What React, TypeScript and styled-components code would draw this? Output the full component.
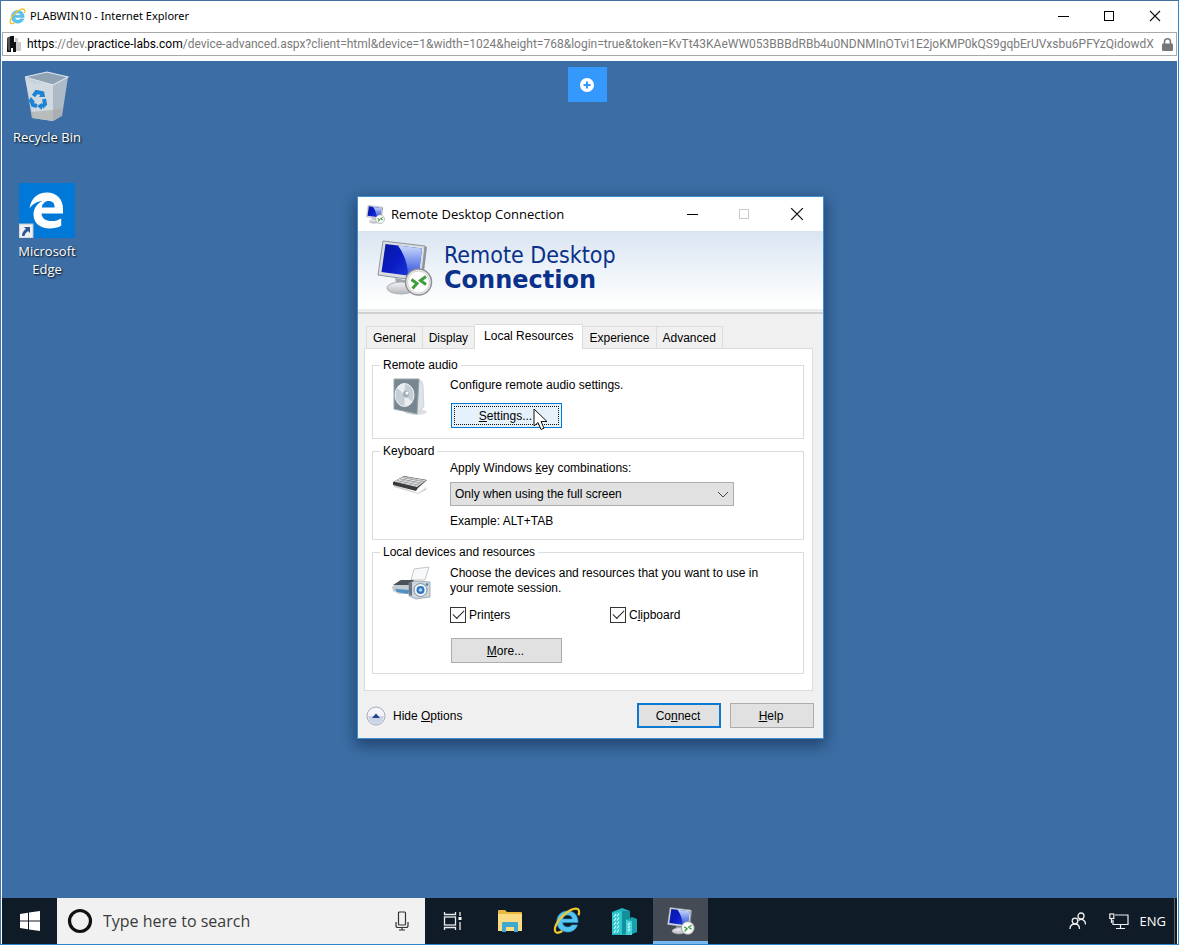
import React from 'react';
import styled, { createGlobalStyle, css } from 'styled-components';

const segoe = `"Open Sans", "Noto Sans", sans-serif`;
const dialogFont = `"Liberation Sans", Arial, sans-serif`;

const GlobalStyle = createGlobalStyle`
  *, *::before, *::after { box-sizing: border-box; }
  body { margin: 0; font-family: ${segoe}; color: #000; }
  button, input, select { font: inherit; color: inherit; margin: 0; }
  svg { display: block; flex: none; }
`;

/* ---------- browser window ---------- */

const BrowserWindow = styled.div`
  min-height: 100vh;
  display: flex;
  flex-direction: column;
  background: #fff;
  border: 1px solid #2e86cc;
  border-top-color: #44729f;
  border-left-color: #3f77a8;
`;

const TitleBar = styled.header`
  display: flex;
  align-items: center;
  height: 30px;
  padding-left: 8px;
`;

const PageTitle = styled.h1`
  flex: 1;
  margin: 0 0 0 4px;
  font-size: 11px;
  line-height: 16px;
  font-weight: 400;
  font-family: "Noto Sans", sans-serif;
`;

const CaptionButton = styled.button<{ $width?: number }>`
  width: ${(p) => p.$width ?? 46}px;
  height: 100%;
  padding: 0;
  border: 0;
  background: transparent;
  display: flex;
  align-items: center;
  justify-content: center;
`;

const CaptionGroup = styled.div`
  display: flex;
  height: 28px;
`;

const AddressBar = styled.div`
  display: flex;
  align-items: center;
  height: 24px;
  margin: 1px 1px 5px;
  padding: 0 3px 0 4px;
  border: 1px solid #a9a9a9;
  gap: 6px;
`;

const Url = styled.div`
  flex: 1;
  min-width: 0;
  overflow: hidden;
  white-space: nowrap;
  font-family: Roboto, "Open Sans", sans-serif;
  font-size: 12px;
  line-height: 22px;
  color: #7b7b7b;
  b { font-weight: 400; color: #000; }
`;

/* ---------- desktop ---------- */

const Desktop = styled.main`
  position: relative;
  flex: 1;
  min-height: 720px;
  margin: 0 1px;
  background: #3c6ea5;
`;

const ShortcutList = styled.nav`
  display: flex;
  flex-direction: column;
  width: 90px;
  padding-top: 8px;
  gap: 37px;
`;

const Shortcut = styled.a`
  display: flex;
  flex-direction: column;
  align-items: center;
  gap: 4px;
  color: #fff;
  font-size: 13px;
  line-height: 18px;
  text-align: center;
  text-decoration: none;
  text-shadow: 1px 1px 2px #000;
`;

const ShortcutLabel = styled.span`
  width: 76px;
`;

const ToolbarToggle = styled.button`
  position: absolute;
  top: 6px;
  left: 50%;
  margin-left: -22px;
  width: 39px;
  height: 35px;
  padding: 0;
  border: 0;
  background: #3498fd;
  display: flex;
  align-items: center;
  justify-content: center;
`;

/* ---------- dialog ---------- */

const Dialog = styled.section`
  position: absolute;
  top: 135px;
  left: 355px;
  width: 467px;
  border: 1px solid #3e8ed0;
  background: #f0f0f0;
  box-shadow: 0 5px 14px 2px rgba(0, 20, 50, 0.45);
  font-family: ${dialogFont};
  font-size: 12px;
  line-height: 16px;
`;

const DialogTitleBar = styled.header`
  display: flex;
  align-items: center;
  height: 34px;
  padding-left: 8px;
  background: #fff;
`;

const DialogTitle = styled.h2`
  flex: 1;
  margin: 0 0 0 6px;
  font-family: ${segoe};
  font-size: 13px;
  font-weight: 400;
`;

const Banner = styled.div`
  display: flex;
  gap: 11px;
  height: 78px;
  padding: 9px 0 0 19px;
  background: linear-gradient(#dae5f2, #fdfefe 90%);
`;

const BannerText = styled.p`
  margin: 3px 0 0;
  color: #0a318a;
  font-family: "DejaVu Sans Condensed", "DejaVu Sans", sans-serif;
  font-size: 23px;
  line-height: 25px;
`;

const BannerStrong = styled.strong`
  display: block;
  font-family: "DejaVu Sans", sans-serif;
  font-size: 24px;
`;

const BannerEdge = styled.div`
  height: 5px;
  border-top: 2px solid #ececec;
  border-bottom: 2px solid #d0d0d0;
`;

const DialogBody = styled.div`
  padding: 10px 10px 10px 6px;
`;

const TabStrip = styled.div`
  display: flex;
  align-items: flex-end;
  padding-left: 2px;
  height: 24px;
`;

const Tab = styled.button<{ $active?: boolean }>`
  height: 22px;
  padding: 0 6px;
  border: 1px solid #dcdcdc;
  border-bottom: 0;
  background: #f0f0f0;
  white-space: nowrap;
  & + & { border-left: 0; }
  ${(p) =>
    p.$active &&
    css`
      height: 25px;
      margin-bottom: -1px;
      padding: 0 9px 3px;
      background: #fff;
      position: relative;
    `}
`;

const TabPanel = styled.div`
  padding: 8px 8px 16px 7px;
  border: 1px solid #dcdcdc;
  background: #fff;
`;

const Group = styled.fieldset`
  margin: 0;
  padding: 0;
  min-width: 0;
  border: 1px solid #dcdcdc;
  & + & { margin-top: 4px; }
`;

const Legend = styled.legend`
  margin-left: 7px;
  padding: 0 3px;
`;

const GroupBody = styled.div<{ $top: number }>`
  display: grid;
  grid-template-columns: 58px 1fr;
  padding: ${(p) => p.$top}px 0 10px 19px;
`;

const GroupContent = styled.div<{ $gap: number }>`
  display: flex;
  flex-direction: column;
  align-items: flex-start;
  gap: ${(p) => p.$gap}px;
`;

const Text = styled.p`
  margin: 0;
  line-height: 15px;
  padding-right: 24px;
`;

const DialogButton = styled.button<{ $look?: 'plain' | 'hover' | 'default'; $wide?: boolean }>`
  width: ${(p) => (p.$wide ? 111 : 84)}px;
  height: 25px;
  padding: 0 2px 0 0;
  border: 1px solid #adadad;
  background: #e1e1e1;
  ${(p) =>
    p.$look === 'hover' &&
    css`
      border-color: #0078d7;
      background: #e5f1fb;
      outline: 1px dotted #111;
      outline-offset: -4px;
    `}
  ${(p) =>
    p.$look === 'default' &&
    css`
      border: 2px solid #0f78d0;
    `}
`;

const ButtonSpot = styled.div`
  position: relative;
  margin-left: 1px;
  display: flex;
`;

const Pointer = styled.svg`
  position: absolute;
  left: 82px;
  top: 5px;
`;

const Field = styled.label`
  display: block;
`;

const SelectWrap = styled.div`
  position: relative;
  width: 284px;
  margin-bottom: 2px;
`;

const Select = styled.select`
  appearance: none;
  display: block;
  width: 100%;
  height: 24px;
  padding: 0 24px 0 4px;
  border: 1px solid #adadad;
  border-radius: 0;
  background: #e1e1e1;
`;

const SelectArrow = styled.svg`
  position: absolute;
  right: 5px;
  top: 9px;
  pointer-events: none;
`;

const CheckRow = styled.div`
  display: grid;
  grid-template-columns: 160px 160px;
  padding-bottom: 4px;
`;

const CheckLabel = styled.label`
  display: flex;
  align-items: center;
  gap: 3px;
`;

const Check = styled.input`
  appearance: none;
  width: 16px;
  height: 16px;
  border: 1px solid #333;
  background: #fff;
  display: grid;
  place-items: center;
  &:checked::after {
    content: '';
    width: 11px;
    height: 6px;
    margin-top: -4px;
    border-left: 1px solid #222;
    border-bottom: 1px solid #222;
    transform: rotate(-45deg);
  }
`;

const DialogFooter = styled.footer`
  display: flex;
  align-items: center;
  margin-top: 12px;
  gap: 9px;
  margin-right: -1px;
`;

const HideOptions = styled.button`
  display: flex;
  align-items: center;
  gap: 7px;
  margin-right: auto;
  padding: 0 0 0 2px;
  border: 0;
  background: transparent;
`;

/* ---------- taskbar ---------- */

const Taskbar = styled.footer`
  display: flex;
  height: 46px;
  margin: 0 1px;
  background: #0f1b27;
  color: #fff;
`;

const TaskButton = styled.button<{ $active?: boolean }>`
  width: 55px;
  height: 46px;
  margin-right: 2px;
  padding: 0;
  border: 0;
  background: ${(p) => (p.$active ? '#444b54' : 'transparent')};
  box-shadow: ${(p) => (p.$active ? 'inset 0 -3px #76b9f0' : 'none')};
  display: flex;
  align-items: center;
  justify-content: center;
`;

const StartButton = styled(TaskButton)`
  margin-right: 0;
`;

const SearchBox = styled.label`
  display: flex;
  align-items: center;
  width: 368px;
  padding: 0 15px 0 9px;
  gap: 9px;
  background: #f1f1f1;
`;

const SearchInput = styled.input`
  flex: 1;
  min-width: 0;
  padding: 0;
  border: 0;
  outline: 0;
  background: transparent;
  font-size: 16px;
  line-height: 24px;
  &::placeholder { color: #3b3b3b; opacity: 1; }
`;

const Tray = styled.div`
  display: flex;
  align-items: center;
  margin-left: auto;
  padding-right: 8px;
  border-right: 1px solid #5b636b;
  margin-right: 2px;
  font-size: 13px;
`;

const TrayButton = styled.button<{ $gap?: number }>`
  margin-right: ${(p) => p.$gap ?? 0}px;
  padding: 0;
  border: 0;
  background: transparent;
`;

/* ---------- drawings ---------- */

const IeIcon = ({ size }: { size: number }) => (
  <svg width={size} height={size} viewBox="0 0 28 28">
    <path
      d="M25 15.500H9.600c.3 2.900 2.300 4.600 5 4.600 2 0 3.300-.8 4.100-2.200h5.800C23 22.400 19.300 25 14.600 25 8.300 25 3.800 20.700 3.800 14.500S8.300 4 14.600 4C21 4 25.300 8.400 25 15.500zM9.800 12h9.500c-.3-2.400-2.200-3.900-4.700-3.900S10.200 9.600 9.800 12z"
      fill="#55c4f0"
      stroke="#2b9bd3"
      strokeWidth=".6"
    />
    <path
      d="M25.500 8.300c1.300-3.600.7-6.600-2.400-6.700C16.800 1.300 4.600 11.700 2.200 20.200c-1 3.700.2 6 3.100 5.500 1.300-.2 2.700-.9 4-1.700"
      fill="none"
      stroke="#f3c62e"
      strokeWidth="2.200"
    />
  </svg>
);

const RemoteIcon = ({ size, id }: { size: number; id: string }) => (
  <svg width={size} height={size} viewBox="0 0 56 56">
    <defs>
      <linearGradient id={id} x1="0" y1="0" x2="1" y2=".6">
        <stop offset="0" stopColor="#0616a0" />
        <stop offset=".5" stopColor="#0a1cc4" />
        <stop offset="1" stopColor="#1f3fd8" />
      </linearGradient>
      <linearGradient id={`${id}-shine`} x1="0" y1="0" x2="0" y2="1">
        <stop offset="0" stopColor="#c9d9fb" />
        <stop offset="1" stopColor="#2a49de" />
      </linearGradient>
      <linearGradient id={`${id}-stand`} x1="0" y1="0" x2="0" y2="1">
        <stop offset="0" stopColor="#f4f4f4" />
        <stop offset="1" stopColor="#b5b8bc" />
      </linearGradient>
    </defs>
    <path d="M18 38l14 3 2 6H20z" fill="#a4a8ad" />
    <ellipse cx="24" cy="48" rx="14" ry="6" fill={`url(#${id}-stand)`} stroke="#a9adb2" />
    <path d="M47 6l3 1-4 33-3 1z" fill="#8f949b" />
    <path d="M6 1l42 5-4 35L1 35z" fill="#d9dce0" stroke="#8f959d" />
    <path d="M8.500 4L45 8.500 41.500 37 4.500 32z" fill={`url(#${id})`} />
    <path d="M21 5.600L45 8.500 41.500 37 31 35.600C31 24 27 14 21 5.600z" fill={`url(#${id}-shine)`} />
    <circle cx="41.500" cy="42" r="13" fill="#efefef" stroke="#8d9197" strokeWidth="1.500" />
    <circle cx="41.500" cy="42" r="11" fill="#fdfdfd" stroke="#d2d2d2" />
    <path d="M34.500 39.500l5.500 4-4.500 5M49 36.500l-5.500 4 5.500 4" fill="none" stroke="#3f9e3c" strokeWidth="3" />
  </svg>
);

const SiteIcon = () => (
  <svg width="14" height="16" viewBox="0 0 14 16">
    <path d="M8 2h3v4h3v9H8z" fill="#c9c9c9" />
    <path d="M0 2l4-2h3v6h2v10H6v-4H4v4H0z" fill="#111" />
    <path d="M0 2l3-1v14l-2-1z" fill="#555" />
  </svg>
);

const LockIcon = () => (
  <svg width="11" height="13" viewBox="0 0 11 13">
    <path d="M2.500 6V3.800a3 3 0 0 1 6 0V6" fill="none" stroke="#777" strokeWidth="1.600" />
    <rect y="5.500" width="11" height="7.500" rx="1" fill="#777" />
  </svg>
);

const MinimizeGlyph = () => (
  <svg width="12" height="12" viewBox="0 0 12 12"><path d="M1 6.500h11" stroke="#000" /></svg>
);

const MaximizeGlyph = ({ color = '#000' }: { color?: string }) => (
  <svg width="12" height="12" viewBox="0 0 12 12">
    <rect x="1.500" y="1.500" width="9" height="9" fill="none" stroke={color} />
  </svg>
);

const CloseGlyph = ({ size = 12 }: { size?: number }) => (
  <svg width={size} height={size} viewBox="0 0 12 12">
    <path d="M1 1l10 10M11 1L1 11" stroke="#111" strokeWidth="1.100" />
  </svg>
);

const RecycleBinIcon = () => (
  <svg width="48" height="55" viewBox="0 0 48 55">
    <path d="M2 9l10 6 31-4-6 37-7 4-19-3z" fill="#c5ced6" opacity=".92" />
    <path d="M2 8l22-5 21 5-15 8z" fill="#8fa3b5" />
    <path d="M30 16l15-8-6 39-9 4z" fill="#aebac5" />
    <path d="M2 8l28 8v36L9 49z" fill="#d3dae0" opacity=".9" />
    <path d="M8 43l22-2v11L9 49zM30 41l9-2-1 8-8 5z" fill="#a9a9a4" opacity=".6" />
    <path d="M2 8l22-5 21 5-15 8z" fill="none" stroke="#dfe6eb" strokeWidth="1.100" />
    <g fill="none" stroke="#1f83d5" strokeWidth="4">
      <path d="M10.500 27l3-4 5 1 1 3" />
      <path d="M21 30l1 5-3 3" />
      <path d="M8 31l2 5 4 1" />
    </g>
    <path d="M16 28h6l-1-6zM19 34v7l-5-4zM5 33l3-5 4 5z" fill="#1f83d5" />
  </svg>
);

const EdgeIcon = () => (
  <svg width="56" height="55" viewBox="0 0 56 55">
    <rect width="56" height="55" fill="#0078d7" />
    <path
      d="M10.500 25.500C12 15 19 9.500 28 9.500c10 0 16 7 16 16.500v4.500H22.500c.3 5 4.500 7.500 10 7.500 3.800 0 7-1 9.700-2.600v7.400C39 44.600 35 45.500 31 45.500c-10 0-16.500-5.500-16.500-14 0-6 3.500-11 9-13.500-6 .5-10.500 3.500-13 7.500zM22.800 24.500h12.800c0-4.200-2-6.500-6-6.500-3.600 0-6.200 2.500-6.800 6.500z"
      fill="#fff"
    />
    <rect y="41" width="14" height="14" fill="#f0f0f0" stroke="#b9c5d1" />
    <path d="M5 44h6v6l-2-2c-2 1.500-3 3-3.500 5H3c0-3 1.500-5.500 4-7z" fill="#2b5797" />
  </svg>
);

const PlusIcon = () => (
  <svg width="14" height="14" viewBox="0 0 14 14">
    <circle cx="7" cy="7" r="7" fill="#fff" />
    <path d="M7 3.500v7M3.500 7h7" stroke="#3498fd" strokeWidth="2" />
  </svg>
);

const SpeakerIcon = () => (
  <svg width="36" height="40" viewBox="0 0 36 40">
    <ellipse cx="24" cy="34" rx="11" ry="3" fill="#000" opacity=".13" />
    <path d="M27 2q4 1 4 5l1 22-8 7z" fill="#dfe3e7" stroke="#bcc3c9" strokeWidth=".6" />
    <path d="M2 1h25l-2 35L2 31z" fill="#77868f" stroke="#98a6ae" />
    <ellipse cx="12.500" cy="17" rx="9.500" ry="11.500" fill="#c5cfd5" stroke="#eef3f6" />
    <path d="M12.500 17L5 9.500A11 11 0 0 1 13 5.500zM12.500 17l8 7a11 11 0 0 1-8 4z" fill="#f1f5f7" opacity=".8" />
    <ellipse cx="14" cy="16" rx="3" ry="3.500" fill="#a3afb7" />
    <circle cx="15" cy="15" r="1.500" fill="#fff" />
  </svg>
);

const KeyboardIcon = () => (
  <svg width="36" height="34" viewBox="0 -14 36 34">
    <path d="M2 11l24 8 9-6-1 3-8 4L2 13z" fill="#000" opacity=".18" />
    <path d="M1 8L12 2l23 4-9 8-2 3L1 11z" fill="#3c3c3e" />
    <path d="M2 7.500L12 2.500l22 3.800-9 6.700z" fill="#e2e3e4" />
    <g stroke="#85878a" strokeWidth=".6">
      <path d="M5 6.500l22 4.800M8 5l21 4.200M11 3.500l21 4" />
      <path d="M7 9l9-5.500M12 10l9-5.500M17 11.200l9-5.700M22 12.300l9-5.800" />
    </g>
  </svg>
);

const DevicesIcon = () => (
  <svg width="39" height="34" viewBox="0 0 39 34">
    <path d="M22 3l15-2-4 13H19z" fill="#f7f8f9" stroke="#b5b9bd" strokeWidth=".8" />
    <path d="M0 21l8-7h14v14L7 28l-6-3z" fill="#c4cbd1" />
    <path d="M1 19l8-5h13l-4 5z" fill="#4a5158" />
    <path d="M3 23l15 1-2 4-11-2z" fill="#4e8fc4" />
    <path d="M17 17l6-2 15 1v15l-14 2-7-3z" fill="#ccd5dd" stroke="#8a97a3" strokeWidth=".7" />
    <path d="M17 17l3-.8V30l-3-1z" fill="#6b7782" />
    <circle cx="28.500" cy="24" r="6.500" fill="#f3f6f8" stroke="#7e90a0" />
    <circle cx="28.500" cy="24" r="4" fill="#2f77c1" />
    <circle cx="28.500" cy="24" r="1.800" fill="#a8d5f5" />
    <circle cx="35" cy="18.500" r="1.300" fill="#4b7eb0" />
  </svg>
);

const CollapseIcon = () => (
  <svg width="20" height="20" viewBox="0 0 20 20">
    <circle cx="10" cy="10" r="9" fill="#f3f5fa" stroke="#a5adbd" />
    <path d="M2 10a8 8 0 0 0 16 0z" fill="#ccd5e8" />
    <path d="M6 12l4-4.500 4 4.500z" fill="#25408f" />
  </svg>
);

const WindowsLogo = () => (
  <svg width="20" height="20" viewBox="0 0 20 20">
    <path d="M0 3l8-1.200v7.700H0zM9 1.600L20 0v9.500H9zM0 10.500h8v7.700L0 17zM9 10.500h11V20L9 18.400z" fill="#fff" />
  </svg>
);

const CortanaIcon = () => (
  <svg width="28" height="28" viewBox="0 0 28 28">
    <circle cx="14" cy="14" r="10.500" fill="none" stroke="#111" strokeWidth="3.200" />
  </svg>
);

const MicIcon = () => (
  <svg width="16" height="20" viewBox="0 0 16 20" fill="none" stroke="#333" strokeWidth="1.200">
    <rect x="4.500" y="1" width="7" height="13" rx="1" />
    <path d="M2 11v3.500a2 2 0 0 0 2 2h8a2 2 0 0 0 2-2V11M8 16.500V19M5 19h6" />
  </svg>
);

const TaskViewIcon = () => (
  <svg width="20" height="18" viewBox="0 0 20 18" fill="none" stroke="#e8eaec" strokeWidth="1.300">
    <rect x="1.500" y="5" width="11" height="8" />
    <path d="M1.500 0v2.500h11V0M1.500 18v-2.500h11V18M17 0v4M17 10v8" />
    <rect x="15.500" y="5" width="3" height="3" fill="#fff" stroke="none" />
  </svg>
);

const FolderIcon = () => (
  <svg width="26" height="24" viewBox="0 0 26 24">
    <path d="M1 2q0-1 1-1h6l2 2h14q1 0 1 1v18H1z" fill="#e9b93f" />
    <path d="M1 5h24v17H1z" fill="#fbdc84" />
    <path d="M5 23v-9q0-1 1-1h14q1 0 1 1v9h-4v-5H9v5z" fill="#3fa9cf" />
  </svg>
);

const ServerIcon = () => (
  <svg width="26" height="27" viewBox="0 0 26 27">
    <path d="M1 4l10-4 8 3v7l-3 17H1z" fill="#21b4bd" />
    <path d="M11 3l8 0v8h-4v15h-5z" fill="#13909b" />
    <path d="M1 5l10-2v23H1z" fill="#2dc7cf" />
    <path d="M15 12l6-3 5 2v13l-7 3h-4z" fill="#15a2ad" />
    <path d="M15 12l6 1v14h-6z" fill="#45d2d9" />
    <g stroke="#d8fbfc" strokeWidth="1.100">
      <path d="M3 9l2-3M6 8.500l2-3M3 13l2-3M6 12.500l2-3M3 17l2-3M6 16.500l2-3M3 21l2-3M6 20.500l2-3M3 25l2-3M6 24.500l2-3M17 17l2-2M17 20l2-2M17 23l2-2" />
    </g>
  </svg>
);

const PeopleIcon = () => (
  <svg width="18" height="18" viewBox="0 0 18 18" fill="none" stroke="#f0f0f0" strokeWidth="1.300">
    <circle cx="6" cy="9" r="2.800" />
    <path d="M1 17c0-3 2-5 5-5s4.500 2 4.500 5" />
    <circle cx="12" cy="4" r="3" />
    <path d="M9.500 8.500c3-2.500 7-.5 7 4" />
  </svg>
);

const NetworkIcon = () => (
  <svg width="20" height="17" viewBox="0 0 20 17" fill="none" stroke="#f0f0f0" strokeWidth="1.200">
    <path d="M6 2h13v9.500H4V7M11.500 11.500V15M7 15.500h9M2.500 6v4" />
    <rect x=".8" y="1" width="4" height="4.500" />
  </svg>
);

const tabs = ['General', 'Display', 'Local Resources', 'Experience', 'Advanced'];

export default function App() {
  return (
    <>
      <GlobalStyle />
      <BrowserWindow>
        <TitleBar>
          <IeIcon size={17} />
          <PageTitle>PLABWIN10 - Internet Explorer</PageTitle>
          <CaptionGroup>
            <CaptionButton aria-label="Minimize"><MinimizeGlyph /></CaptionButton>
            <CaptionButton aria-label="Maximize"><MaximizeGlyph /></CaptionButton>
            <CaptionButton aria-label="Close"><CloseGlyph /></CaptionButton>
          </CaptionGroup>
        </TitleBar>
        <AddressBar>
          <SiteIcon />
          <Url>
            <b>https</b>://dev.<b>practice-labs.com</b>
            /device-advanced.aspx?client=html&amp;device=1&amp;width=1024&amp;height=768&amp;login=true&amp;token=KvTt43KAeWW053BBBdRBb4u0NDNMInOTvi1E2joKMP0kQS9gqbErUVxsbu6PFYzQidowdX
          </Url>
          <LockIcon />
        </AddressBar>

        <Desktop>
          <ShortcutList>
            <Shortcut href="#recycle-bin">
              <RecycleBinIcon />
              <ShortcutLabel>Recycle Bin</ShortcutLabel>
            </Shortcut>
            <Shortcut href="#edge">
              <EdgeIcon />
              <ShortcutLabel>Microsoft Edge</ShortcutLabel>
            </Shortcut>
          </ShortcutList>

          <ToolbarToggle aria-label="Show toolbar"><PlusIcon /></ToolbarToggle>

          <Dialog role="dialog" aria-labelledby="rdc-title">
            <DialogTitleBar>
              <RemoteIcon size={19} id="rdc-small" />
              <DialogTitle id="rdc-title">Remote Desktop Connection</DialogTitle>
              <CaptionButton $width={52} aria-label="Minimize"><MinimizeGlyph /></CaptionButton>
              <CaptionButton $width={52} aria-label="Maximize" disabled><MaximizeGlyph color="#ccc" /></CaptionButton>
              <CaptionButton $width={53} aria-label="Close"><CloseGlyph size={14} /></CaptionButton>
            </DialogTitleBar>
            <Banner>
              <RemoteIcon size={56} id="rdc-large" />
              <BannerText>
                Remote Desktop
                <BannerStrong>Connection</BannerStrong>
              </BannerText>
            </Banner>
            <BannerEdge />

            <DialogBody>
              <TabStrip role="tablist">
                {tabs.map((name) => (
                  <Tab
                    key={name}
                    role="tab"
                    $active={name === 'Local Resources'}
                    aria-selected={name === 'Local Resources'}
                  >
                    {name}
                  </Tab>
                ))}
              </TabStrip>
              <TabPanel role="tabpanel">
                <Group>
                  <Legend>Remote audio</Legend>
                  <GroupBody $top={5}>
                    <SpeakerIcon />
                    <GroupContent $gap={10}>
                      <Text>Configure remote audio settings.</Text>
                      <ButtonSpot>
                        <DialogButton $look="hover" $wide><u>S</u>ettings...</DialogButton>
                        <Pointer width="15" height="23" viewBox="0 0 15 23">
                          <path
                            d="M1 1v17l4-3.500 3 7 3-1.300-3-6.700h6z"
                            fill="#fff"
                            stroke="#111"
                          />
                        </Pointer>
                      </ButtonSpot>
                    </GroupContent>
                  </GroupBody>
                </Group>

                <Group>
                  <Legend>Keyboard</Legend>
                  <GroupBody $top={1}>
                    <KeyboardIcon />
                    <GroupContent $gap={6}>
                      <Field htmlFor="combinations">Apply Windows <u>k</u>ey combinations:</Field>
                      <SelectWrap>
                        <Select id="combinations" defaultValue="full">
                          <option value="full">Only when using the full screen</option>
                        </Select>
                        <SelectArrow width="12" height="7" viewBox="0 0 12 7">
                          <path d="M1 1l5 5 5-5" fill="none" stroke="#444" />
                        </SelectArrow>
                      </SelectWrap>
                      <Text>Example: ALT+TAB</Text>
                    </GroupContent>
                  </GroupBody>
                </Group>

                <Group>
                  <Legend>Local devices and resources</Legend>
                  <GroupBody $top={6}>
                    <DevicesIcon />
                    <GroupContent $gap={11}>
                      <Text>Choose the devices and resources that you want to use in your remote session.</Text>
                      <CheckRow>
                        <CheckLabel>
                          <Check type="checkbox" defaultChecked />
                          <span>Prin<u>t</u>ers</span>
                        </CheckLabel>
                        <CheckLabel>
                          <Check type="checkbox" defaultChecked />
                          <span>C<u>l</u>ipboard</span>
                        </CheckLabel>
                      </CheckRow>
                      <ButtonSpot>
                        <DialogButton $wide><u>M</u>ore...</DialogButton>
                      </ButtonSpot>
                    </GroupContent>
                  </GroupBody>
                </Group>
              </TabPanel>

              <DialogFooter>
                <HideOptions>
                  <CollapseIcon />
                  <span>Hide <u>O</u>ptions</span>
                </HideOptions>
                <DialogButton $look="default">Co<u>n</u>nect</DialogButton>
                <DialogButton><u>H</u>elp</DialogButton>
              </DialogFooter>
            </DialogBody>
          </Dialog>
        </Desktop>

        <Taskbar>
          <StartButton aria-label="Start"><WindowsLogo /></StartButton>
          <SearchBox>
            <CortanaIcon />
            <SearchInput type="text" placeholder="Type here to search" aria-label="Search" />
            <MicIcon />
          </SearchBox>
          <TaskButton aria-label="Task view"><TaskViewIcon /></TaskButton>
          <TaskButton aria-label="File Explorer"><FolderIcon /></TaskButton>
          <TaskButton aria-label="Internet Explorer"><IeIcon size={28} /></TaskButton>
          <TaskButton aria-label="Server Manager"><ServerIcon /></TaskButton>
          <TaskButton $active aria-label="Remote Desktop Connection"><RemoteIcon size={28} id="rdc-task" /></TaskButton>
          <Tray>
            <TrayButton $gap={22} aria-label="People"><PeopleIcon /></TrayButton>
            <TrayButton $gap={11} aria-label="Network"><NetworkIcon /></TrayButton>
            <TrayButton>ENG</TrayButton>
          </Tray>
        </Taskbar>
      </BrowserWindow>
    </>
  );
}
